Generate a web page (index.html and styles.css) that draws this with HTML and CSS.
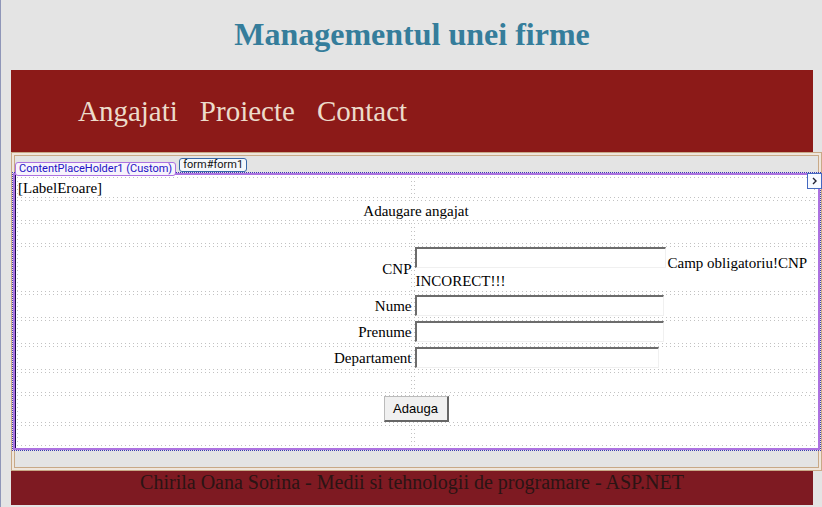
FILE: index.html
```html
<!DOCTYPE html>
<html lang="ro">
<head>
<meta charset="utf-8">
<title>Managementul unei firme</title>
<link rel="stylesheet" href="styles.css">
</head>
<body>
<header>
  <h1>Managementul unei firme</h1>
  <nav class="menu">
    <a href="#angajati">Angajati</a>
    <a href="#proiecte">Proiecte</a>
    <a href="#contact">Contact</a>
  </nav>
</header>
<main class="frame">
  <div class="frame-inner">
    <div class="region">
      <div class="tags">
        <span class="tag tag-holder">ContentPlaceHolder1 (Custom)</span>
        <span class="tag tag-form">form#form1</span>
      </div>
      <button class="smart" type="button" aria-label="Tasks"><svg width="6" height="8" viewBox="0 0 6 8"><path d="M1 1l3 3-3 3" fill="none" stroke="#223" stroke-width="1.4"/></svg></button>
      <form class="sheet" id="form1">
        <div class="row line"><div class="cell">[LabelEroare]</div><div class="cell"></div></div>
        <div class="row line"><div class="cell wide">Adaugare angajat</div></div>
        <div class="row line"><div class="cell"></div><div class="cell"></div></div>
        <div class="row tall"><div class="cell label"><label for="cnp">CNP</label></div><div class="cell box"><input id="cnp" class="w-cnp" type="text"><span class="error">Camp obligatoriu!CNP INCORECT!!!</span></div></div>
        <div class="row field"><div class="cell label"><label for="nume">Nume</label></div><div class="cell box"><input id="nume" class="w-name" type="text"></div></div>
        <div class="row field"><div class="cell label"><label for="prenume">Prenume</label></div><div class="cell box"><input id="prenume" class="w-name" type="text"></div></div>
        <div class="row field"><div class="cell label"><label for="dep">Departament</label></div><div class="cell box"><input id="dep" class="w-dep" type="text"></div></div>
        <div class="row line"><div class="cell"></div><div class="cell"></div></div>
        <div class="row action"><div class="cell box wide"><button class="add" type="button">Adauga</button></div></div>
        <div class="row line"><div class="cell"></div><div class="cell"></div></div>
      </form>
    </div>
  </div>
</main>
<footer>Chirila Oana Sorina - Medii si tehnologii de programare - ASP.NET</footer>
</body>
</html>
```
FILE: styles.css
```css
* { box-sizing: border-box; }
body {
  margin: 0;
  padding: 0 9px 0 10px;
  min-height: 100vh;
  border-left: 1px solid #8f96b8;
  background: #e4e4e4;
  font: 15px/18px "Liberation Serif", serif;
  color: #000;
}
h1 {
  margin: 0;
  padding: 14px 0 16px;
  font-size: 32px;
  line-height: 40px;
  text-align: center;
  color: #357d9b;
}
.menu {
  display: flex;
  gap: 22px;
  padding: 24px 67px;
  background: #8c1a18;
  font-size: 29px;
  line-height: 34px;
}
.menu a { color: #ecdccb; text-decoration: none; }
.frame {
  margin-right: -9px;
  padding: 2px;
  border: 1px solid #c8a987;
  background: #efe6dc;
}
.frame-inner {
  padding: 16px 0;
  border: 1px solid #c8a987;
  background: #e4e4e4;
}
.region {
  position: relative;
  margin: 0 -3px;
  border: 1px dotted #3a3ab0;
}
.sheet {
  display: grid;
  gap: 2px;
  padding: 2px 3px 2px 2px;
  border: 2px solid #ac72e0;
  background: #fff;
  box-shadow: inset 1px 0 #1a0a50;
}
.tags {
  position: absolute;
  left: 2px;
  top: -15px;
  display: flex;
  gap: 3px;
  font: 11px/12px Roboto, sans-serif;
}
.tag { padding: 0 3px; border: 1px solid; border-radius: 3px; white-space: nowrap; background: #f7f3fc; }
.tag-holder { margin-top: 4px; border-color: #ac72e0; color: #2412c4; }
.tag-form { margin-bottom: 4px; border-color: #3768a8; color: #111; background: #f4f7fa; }
.smart {
  position: absolute;
  top: 0;
  right: -2px;
  display: grid;
  place-items: center;
  width: 15px;
  height: 16px;
  padding: 0;
  border: 1px solid #4469c0;
  background: #f7faff;
}
.row { display: grid; grid-template-columns: 79fr 80fr; gap: 2px; }
.line { min-height: 21px; }
.field { min-height: 24px; }
.tall { min-height: 46px; }
.action { min-height: 27px; }
/* Sparse dotted outline: one dot every four pixels on each side */
.cell {
  --dot: #c2c2c2 0 1px, transparent 1px 4px;
  min-width: 0;
  padding: 2px 1px 1px;
  background:
    repeating-linear-gradient(90deg, var(--dot)) top / 100% 1px no-repeat,
    repeating-linear-gradient(90deg, var(--dot)) bottom / 100% 1px no-repeat,
    repeating-linear-gradient(var(--dot)) left / 1px 100% no-repeat,
    repeating-linear-gradient(var(--dot)) right / 1px 100% no-repeat;
}
.box { padding-top: 1px; }
.wide { grid-column: 1 / -1; text-align: center; }
.label { display: flex; align-items: center; justify-content: flex-end; padding: 1px 1px 2px; }
input {
  height: 21px;
  padding: 1px;
  border: 1px solid #f0f0f0;
  border-top: 2px solid #6c6c6c;
  border-left: 2px solid #6c6c6c;
  background: #fff;
  vertical-align: top;
}
.w-cnp { width: 251px; margin-right: 1px; vertical-align: 5px; }
.w-name { width: 249px; }
.w-dep { width: 244px; }
.add {
  width: 65px;
  height: 26px;
  padding: 0;
  border: 1px solid #bbb;
  border-right: 2px solid #666;
  border-bottom: 2px solid #666;
  background: #f0f0f0;
  font: 13px/20px "Liberation Sans", sans-serif;
  color: #000;
}
footer {
  height: 34px;
  background: #7e1a22;
  font-size: 20px;
  line-height: 22px;
  text-align: center;
  color: #2b1414;
}
```
